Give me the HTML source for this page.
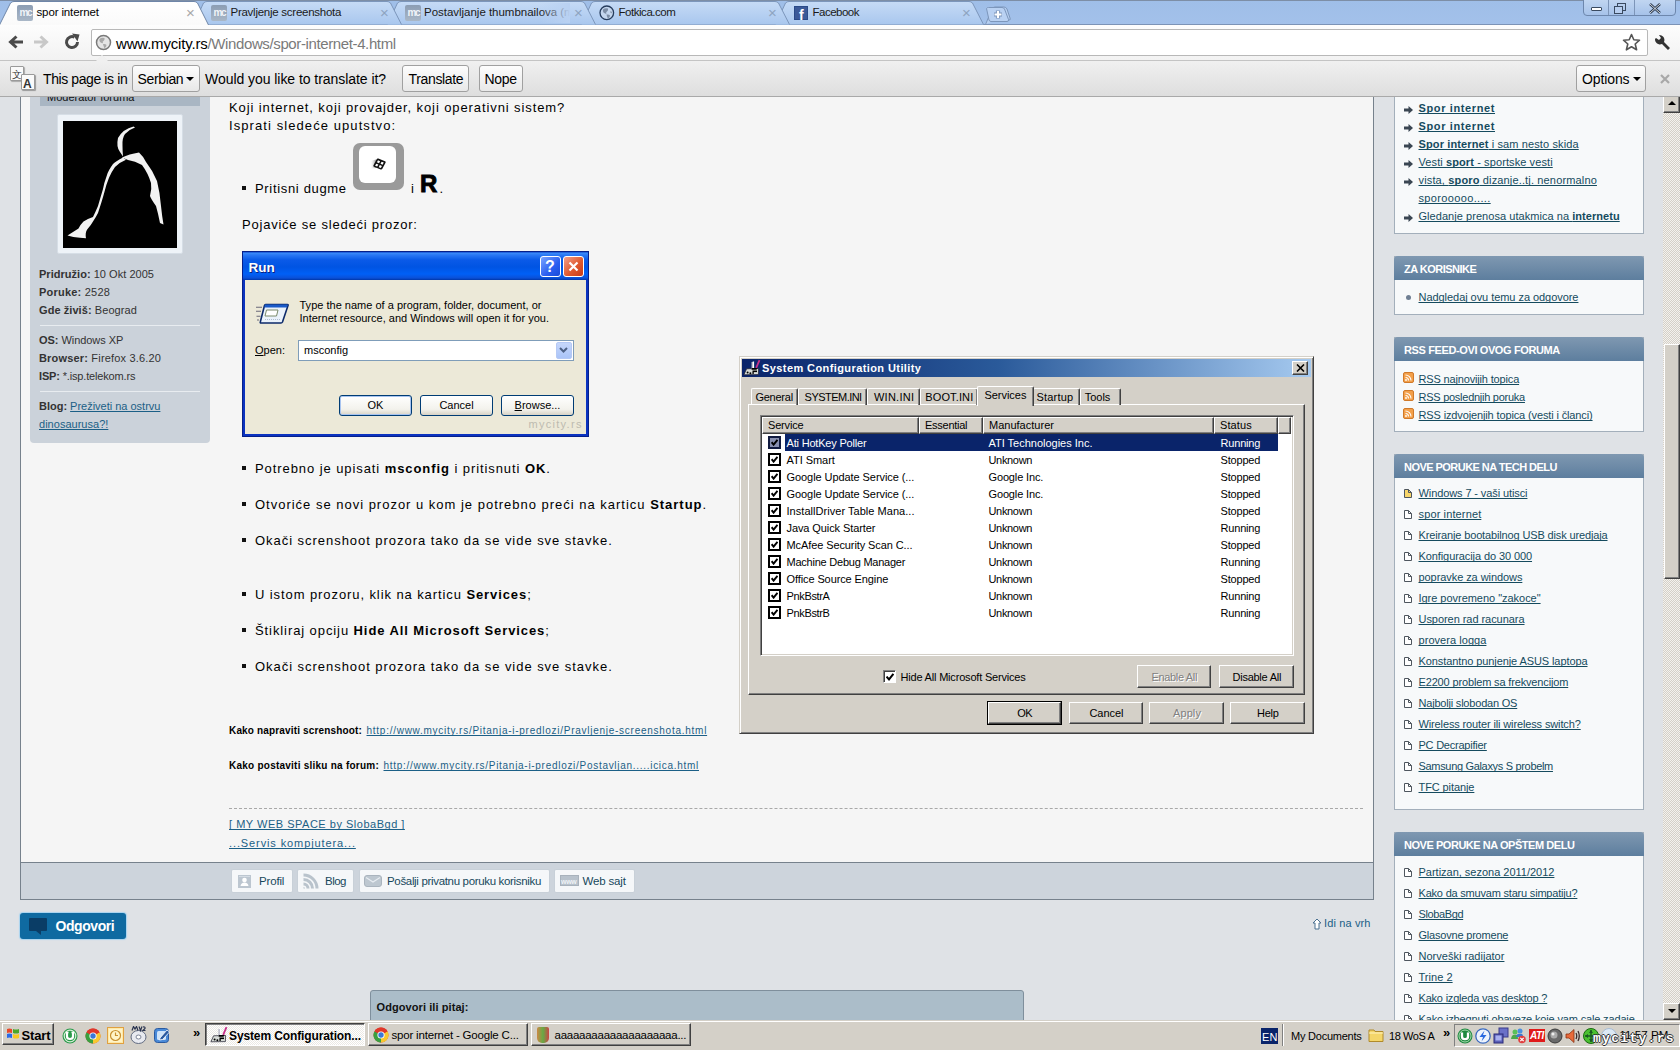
<!DOCTYPE html>
<html><head><meta charset="utf-8"><style>
*{margin:0;padding:0;box-sizing:border-box}
html,body{width:1680px;height:1050px;overflow:hidden;background:#dfe2e6;font-family:"Liberation Sans",sans-serif;position:relative}
.a{position:absolute}
.t{position:absolute;white-space:nowrap;line-height:1;text-decoration-skip-ink:none}
u{text-decoration-skip-ink:none}
.btn{position:absolute;border:1px solid #a0a0a0;border-radius:3px;background:linear-gradient(#fdfdfd,#e8e8e8)}
.xpbtn{position:absolute;background:#d4d0c8;border:1px solid;border-color:#fff #404040 #404040 #fff;box-shadow:inset -1px -1px #808080}
.bul{position:absolute;width:4px;height:4px;background:#111}
.lk{color:#1b5f86;text-decoration:underline;text-decoration-skip-ink:none}
.pb{position:absolute;height:24px;background:#f5f7f9;border:1px solid #c4ccd4;border-radius:2px}
.rb{position:absolute;left:1394px;width:250px;background:#f7f9fa;border:1px solid #a3afbb}
.rh{position:absolute;left:1394px;width:250px;height:24px;background:linear-gradient(#7f98b1,#5d7e9e);border-radius:4px 4px 0 0}
.rl{color:#154b5e;text-decoration:underline;text-decoration-skip-ink:none}
.xpb{position:absolute;height:22px;background:linear-gradient(#fff,#f3f2ec 70%,#d8d3c6);border:1px solid #003c74;border-radius:3px}
.w98{position:absolute;background:#d4d0c8;border:1px solid;border-color:#fff #404040 #404040 #fff;box-shadow:inset -1px -1px #808080}
</style></head><body>
<div class="a" style="left:0px;top:97px;width:1663px;height:923px;background:#dfe2e6"></div>
<div class="a" style="left:20px;top:80px;width:1354px;height:820px;background:#f5f5f5;border:1px solid #76818c;border-top:none"></div>
<div class="a" style="left:21px;top:862px;width:1352px;height:37px;background:#cdd4dc;border-top:1px solid #76818c"></div>
<div class="a" style="left:30px;top:80px;width:180px;height:363px;background:#cbd2da;border-radius:0 0 4px 4px"></div>
<div class="a" style="left:40px;top:80px;width:160px;height:26px;background:#a9b6c3"></div>
<span class="t " style="left:47px;top:91.69px;font-size:11px;color:#111;">Moderator foruma</span>
<div class="a" style="left:57px;top:114px;width:126px;height:140px;background:#eef3f8;border:1px solid #d6dee6;border-radius:2px"></div>
<div class="a" style="left:63px;top:121px;width:114px;height:127px;background:#000;overflow:hidden">
<svg width="114" height="127" viewBox="0 0 114 127">
 <path d="M70.5 5.5 Q60 8 55 17 Q53 26 57 31 L60 35.5 Q59.5 30 59.5 25 Q59 17 62 13 Q66 8.5 72 6.5Z" fill="#f2f2f2"></path><path d="M57 22 Q55 26 58 29" stroke="#f2f2f2" stroke-width="1.5" fill="none"></path>
 <path d="M59 36.5 Q66 33 76 31.5 Q80 35 83 41 Q90 50 94 60 Q97 72 98 85 Q99 95 100.5 103.5 L97 102 Q95 92 93 85 Q88 78 87 75 Q89 68 88 62 Q85 52 79 44 Q72 40 65 39 Z" fill="#f2f2f2"></path>
 <path d="M60 36.5 Q53 40 50 43 Q45 50 44 54 Q41 62 40 68 Q37 78 35 85 Q32 92 30 96 Q24 98 20.5 100.5 Q17 104 15.5 107.5 Q10 111 4.5 114.5 Q10 116.5 17 116.7 L23 117.3 Q22 112 24 108.8 Q28 104 30 100.4 Q33 96 35 92 Q39 80 41 72.6 Q43 64 46 56.8 Q49 50 52 46 Q57 41 63 38.7Z" fill="#f2f2f2"></path>
</svg></div>
<span class="t" style="left: 39px; top: 269.19px; font-size: 11px; color: rgb(51, 51, 51); letter-spacing: 0.03px;"><b>Pridružio:</b> 10 Okt 2005</span>
<span class="t" style="left: 39px; top: 287.19px; font-size: 11px; color: rgb(51, 51, 51); letter-spacing: 0.22px;"><b>Poruke:</b> 2528</span>
<span class="t" style="left: 39px; top: 305.19px; font-size: 11px; color: rgb(51, 51, 51); letter-spacing: 0.07px;"><b>Gde živiš:</b> Beograd</span>
<div class="a" style="left:40px;top:325px;width:160px;height:1px;background:#e8ecf0"></div>
<span class="t" style="left: 39px; top: 334.69px; font-size: 11px; color: rgb(51, 51, 51); letter-spacing: -0.05px;"><b>OS:</b> Windows XP</span>
<span class="t" style="left: 39px; top: 352.69px; font-size: 11px; color: rgb(51, 51, 51); letter-spacing: 0.18px;"><b>Browser:</b> Firefox 3.6.20</span>
<span class="t" style="left: 39px; top: 370.69px; font-size: 11px; color: rgb(51, 51, 51); letter-spacing: -0.16px;"><b>ISP:</b> *.isp.telekom.rs</span>
<div class="a" style="left:40px;top:391px;width:160px;height:1px;background:#e8ecf0"></div>
<span class="t" style="left: 39px; top: 400.69px; font-size: 11px; color: rgb(51, 51, 51); letter-spacing: -0.01px;"><b>Blog:</b> <span class="lk">Preživeti na ostrvu</span></span>
<span class="t lk" style="left: 39px; top: 418.69px; font-size: 11px; color: rgb(27, 95, 134); letter-spacing: 0.02px;">dinosaurusa?!</span>
<span class="t" style="left: 229px; top: 100.6px; font-size: 13px; color: rgb(0, 0, 0); letter-spacing: 0.9px;">Koji internet, koji provajder, koji operativni sistem?</span>
<span class="t" style="left: 229px; top: 118.6px; font-size: 13px; color: rgb(0, 0, 0); letter-spacing: 1.08px;">Isprati sledeće uputstvo:</span>
<div class="a" style="left:242px;top:186px;width:4px;height:4px;background:#111"></div>
<span class="t" style="left: 255px; top: 181.5px; font-size: 13px; color: rgb(0, 0, 0); letter-spacing: 0.67px;">Pritisni dugme</span>
<div class="a" style="left:353px;top:143px;width:51px;height:47px;background:#9a9a9a;border-radius:7px"></div>
<div class="a" style="left:359px;top:146px;width:37px;height:37px;background:#fff;border-radius:6px"></div>
<svg class="a" style="left:369px;top:156px" width="18" height="16" viewBox="0 0 18 16"><defs><linearGradient id="wg" x1="0" x2="1"><stop offset="0" stop-color="#fff" stop-opacity="0"></stop><stop offset="1" stop-color="#888"></stop></linearGradient></defs><path d="M1 5 L7 3.5 L7.5 12 L2 12.5Z" fill="url(#wg)"></path><g transform="translate(10.5 8) rotate(22) skewX(-6)"><rect x="-4.8" y="-4.6" width="9.6" height="9.2" rx="1.2" fill="#111"></rect><rect x="-3.1" y="-2.9" width="2.3" height="2.3" fill="#fff"></rect><rect x="0.8" y="-2.9" width="2.3" height="2.3" fill="#fff"></rect><rect x="-3.1" y="0.9" width="2.3" height="2.3" fill="#fff"></rect><rect x="0.8" y="0.9" width="2.3" height="2.3" fill="#fff"></rect></g></svg>
<span class="t" style="left: 411px; top: 181.5px; font-size: 13px; color: rgb(0, 0, 0); letter-spacing: 1.15px;">i</span>
<span class="t " style="left:420px;top:171.68px;font-size:24px;color:#000;font-weight:bold;-webkit-text-stroke:0.9px #000;letter-spacing:0;transform:scaleX(1.0);transform-origin:0 0">R</span>
<span class="t" style="left: 439.5px; top: 181.5px; font-size: 13px; color: rgb(0, 0, 0); letter-spacing: -0.58px;">.</span>
<span class="t" style="left: 242px; top: 218px; font-size: 13px; color: rgb(0, 0, 0); letter-spacing: 0.78px;">Pojaviće se sledeći prozor:</span>
<div class="a" style="left:242px;top:466px;width:4px;height:4px;background:#111"></div>
<span class="t" style="left: 255px; top: 461.9px; font-size: 13px; color: rgb(0, 0, 0); letter-spacing: 0.92px;">Potrebno je upisati <b>msconfig</b> i pritisnuti <b>OK</b>.</span>
<div class="a" style="left:242px;top:502px;width:4px;height:4px;background:#111"></div>
<span class="t" style="left: 255px; top: 497.9px; font-size: 13px; color: rgb(0, 0, 0); letter-spacing: 0.99px;">Otvoriće se novi prozor u kom je potrebno preći na karticu <b>Startup</b>.</span>
<div class="a" style="left:242px;top:538px;width:4px;height:4px;background:#111"></div>
<span class="t" style="left: 255px; top: 533.9px; font-size: 13px; color: rgb(0, 0, 0); letter-spacing: 0.96px;">Okači screnshoot prozora tako da se vide sve stavke.</span>
<div class="a" style="left:242px;top:592px;width:4px;height:4px;background:#111"></div>
<span class="t" style="left: 255px; top: 588px; font-size: 13px; color: rgb(0, 0, 0); letter-spacing: 0.91px;">U istom prozoru, klik na karticu <b>Services</b>;</span>
<div class="a" style="left:242px;top:628px;width:4px;height:4px;background:#111"></div>
<span class="t" style="left: 255px; top: 624px; font-size: 13px; color: rgb(0, 0, 0); letter-spacing: 0.91px;">Štikliraj opciju <b>Hide All Microsoft Services</b>;</span>
<div class="a" style="left:242px;top:664px;width:4px;height:4px;background:#111"></div>
<span class="t" style="left: 255px; top: 659.7px; font-size: 13px; color: rgb(0, 0, 0); letter-spacing: 0.96px;">Okači screnshoot prozora tako da se vide sve stavke.</span>
<span class="t " style="left: 229px; top: 725.53px; font-size: 10px; color: rgb(0, 0, 0); font-weight: bold; letter-spacing: 0.16px;">Kako napraviti screnshoot:</span>
<span class="t lk" style="left: 366.5px; top: 725.53px; font-size: 10px; color: rgb(27, 95, 134); letter-spacing: 0.74px;">http://www.mycity.rs/Pitanja-i-predlozi/Pravljenje-screenshota.html</span>
<span class="t " style="left: 229px; top: 761.13px; font-size: 10px; color: rgb(0, 0, 0); font-weight: bold; letter-spacing: 0.24px;">Kako postaviti sliku na forum:</span>
<span class="t lk" style="left: 383.5px; top: 761.13px; font-size: 10px; color: rgb(27, 95, 134); letter-spacing: 0.71px;">http://www.mycity.rs/Pitanja-i-predlozi/Postavljan.....icica.html</span>
<div class="a" style="left:229px;top:808px;width:1134px;height:0px;border-top:1px dashed #a8a8a8"></div>
<span class="t lk" style="left: 229px; top: 818.89px; font-size: 11px; color: rgb(27, 95, 134); letter-spacing: 0.51px;">[ MY WEB SPACE by SlobaBgd ]</span>
<span class="t lk" style="left: 229px; top: 837.69px; font-size: 11px; color: rgb(27, 95, 134); letter-spacing: 0.89px;">...Servis kompjutera...</span>
<div class="a" style="left:231px;top:869px;width:62px;height:24px;background:#f5f7f9;border:1px solid #c8d0d8;border-radius:2px"></div>
<svg class="a" style="left:238px;top:875px" width="13" height="13" viewBox="0 0 13 13"><rect width="13" height="13" fill="#bcc6d0"></rect><circle cx="6.5" cy="5" r="2.3" fill="#fff"></circle><path d="M2.5 11 Q3 7.5 6.5 7.5 Q10 7.5 10.5 11Z" fill="#fff"></path><rect x="1" y="1" width="11" height="1" fill="#d4dce4"></rect></svg>
<span class="t " style="left: 259px; top: 875.77px; font-size: 11.5px; color: rgb(23, 72, 92); letter-spacing: -0.16px;">Profil</span>
<div class="a" style="left:297px;top:869px;width:57px;height:24px;background:#f5f7f9;border:1px solid #c8d0d8;border-radius:2px"></div>
<svg class="a" style="left:303px;top:873px" width="16" height="16" viewBox="0 0 16 16"><path d="M0.5 0.5 A15 15 0 0 1 15.5 15.5 H12.5 A12 12 0 0 0 0.5 3.5Z M0.5 5 A10.5 10.5 0 0 1 11 15.5 H8 A7.5 7.5 0 0 0 0.5 8Z M0.5 9.5 A6 6 0 0 1 6.5 15.5 H3.5 A3 3 0 0 0 0.5 12.5Z M0.5 14 A1.5 1.5 0 0 1 2 15.5 H0.5Z" fill="#b9c3cc"></path></svg>
<span class="t " style="left: 325px; top: 875.77px; font-size: 11.5px; color: rgb(23, 72, 92); letter-spacing: -0.54px;">Blog</span>
<div class="a" style="left:359px;top:869px;width:191px;height:24px;background:#f5f7f9;border:1px solid #c8d0d8;border-radius:2px"></div>
<svg class="a" style="left:364px;top:875px" width="18" height="12" viewBox="0 0 18 12"><rect x="0.5" y="0.5" width="17" height="11" rx="2.5" fill="#bdc7d0" stroke="#aab4be"></rect><path d="M2 2.5 L9 7 L16 2.5" fill="none" stroke="#e8edf2" stroke-width="1.2"></path></svg>
<span class="t " style="left: 387px; top: 875.77px; font-size: 11.5px; color: rgb(23, 72, 92); letter-spacing: -0.33px;">Pošalji privatnu poruku korisniku</span>
<div class="a" style="left:554px;top:869px;width:81px;height:24px;background:#f5f7f9;border:1px solid #c8d0d8;border-radius:2px"></div>
<div class="a" style="left:560px;top:875px;width:19px;height:11px;background:#b8c2cc;border:1px solid #a8b2bc"></div><span class="t " style="left:561px;top:878.07px;font-size:7px;color:#eef2f6;font-weight:bold;letter-spacing:-0.3px">www</span>
<span class="t " style="left: 582.5px; top: 875.77px; font-size: 11.5px; color: rgb(23, 72, 92); letter-spacing: -0.16px;">Web sajt</span>
<div class="a" style="left:20px;top:913px;width:106px;height:26px;background:#0f6aa1;border-radius:3px;box-shadow:0 0 1px 1px #a8d4f0"></div>
<div class="a" style="left:29px;top:918px;width:18px;height:13px;background:#0a3d66;border-radius:1px"></div>
<div class="a" style="left:36px;top:931px;width:0;height:0;border-left:5px solid transparent;border-top:4px solid #0a3d66"></div>
<span class="t " style="left: 55.5px; top: 919.15px; font-size: 14px; color: rgb(255, 255, 255); font-weight: bold; letter-spacing: -0.44px;">Odgovori</span>
<svg class="a" style="left:1312px;top:918px" width="10" height="12" viewBox="0 0 10 12"><path d="M5 1 L9 5 H7 V11 H3 V5 H1Z" fill="#fff" stroke="#4a7090" stroke-width="1"></path></svg>
<span class="t " style="left: 1324px; top: 918.19px; font-size: 11px; color: rgb(27, 95, 134); letter-spacing: 0.13px;">Idi na vrh</span>
<div class="a" style="left:370px;top:990px;width:654px;height:40px;background:#abbdc9;border:1px solid #7f8f9c;border-radius:3px 3px 0 0"></div>
<span class="t " style="left: 376.5px; top: 1001.69px; font-size: 11px; color: rgb(17, 17, 17); font-weight: bold; letter-spacing: 0.08px;">Odgovori ili pitaj:</span>
<div class="a" style="left:1394px;top:60px;width:250px;height:174px;background:#f7f9fa;border:1px solid #a3afbb"></div>
<svg class="a" style="left:1404px;top:106px" width="9" height="8" viewBox="0 0 9 8"><path d="M0 2.5 H4.5 V0 L9 4 L4.5 8 V5.5 H0Z" fill="#3a4652"></path></svg>
<span class="t rl" style="left: 1418.5px; top: 103.29px; font-size: 11px; letter-spacing: 0.62px;"><b>Spor internet</b></span>
<svg class="a" style="left:1404px;top:124px" width="9" height="8" viewBox="0 0 9 8"><path d="M0 2.5 H4.5 V0 L9 4 L4.5 8 V5.5 H0Z" fill="#3a4652"></path></svg>
<span class="t rl" style="left: 1418.5px; top: 121.29px; font-size: 11px; letter-spacing: 0.62px;"><b>Spor internet</b></span>
<svg class="a" style="left:1404px;top:142px" width="9" height="8" viewBox="0 0 9 8"><path d="M0 2.5 H4.5 V0 L9 4 L4.5 8 V5.5 H0Z" fill="#3a4652"></path></svg>
<span class="t rl" style="left: 1418.5px; top: 139.29px; font-size: 11px; letter-spacing: 0.12px;"><b>Spor internet</b> i sam nesto skida</span>
<svg class="a" style="left:1404px;top:160px" width="9" height="8" viewBox="0 0 9 8"><path d="M0 2.5 H4.5 V0 L9 4 L4.5 8 V5.5 H0Z" fill="#3a4652"></path></svg>
<span class="t rl" style="left: 1418.5px; top: 157.29px; font-size: 11px; letter-spacing: 0.1px;">Vesti <b>sport</b> - sportske vesti</span>
<svg class="a" style="left:1404px;top:178px" width="9" height="8" viewBox="0 0 9 8"><path d="M0 2.5 H4.5 V0 L9 4 L4.5 8 V5.5 H0Z" fill="#3a4652"></path></svg>
<span class="t rl" style="left: 1418.5px; top: 175.29px; font-size: 11px; letter-spacing: 0.15px;">vista, <b>sporo</b> dizanje..tj. nenormalno</span>
<span class="t rl" style="left: 1418.5px; top: 193.29px; font-size: 11px; letter-spacing: 0.35px;">sporooooo.....</span>
<svg class="a" style="left:1404px;top:214px" width="9" height="8" viewBox="0 0 9 8"><path d="M0 2.5 H4.5 V0 L9 4 L4.5 8 V5.5 H0Z" fill="#3a4652"></path></svg>
<span class="t rl" style="left: 1418.5px; top: 211.29px; font-size: 11px; letter-spacing: 0.05px;">Gledanje prenosa utakmica na <b>internetu</b></span>
<div class="a" style="left:1394px;top:256px;width:250px;height:59px;background:#f7f9fa;border:1px solid #a3afbb"></div><div class="a" style="left:1394px;top:256px;width:250px;height:24px;background:linear-gradient(#7f98b1,#5d7e9e);border-radius:4px 4px 0 0"></div><span class="t " style="left: 1404px; top: 263.69px; font-size: 11px; color: rgb(255, 255, 255); font-weight: bold; letter-spacing: -0.51px;">ZA KORISNIKE</span>
<div class="a" style="left:1406px;top:295px;width:5px;height:5px;border-radius:50%;background:#6f7f93"></div>
<span class="t rl" style="left: 1418.5px; top: 292.19px; font-size: 11px; letter-spacing: -0.05px;">Nadgledaj ovu temu za odgovore</span>
<div class="a" style="left:1394px;top:337px;width:250px;height:95px;background:#f7f9fa;border:1px solid #a3afbb"></div><div class="a" style="left:1394px;top:337px;width:250px;height:24px;background:linear-gradient(#7f98b1,#5d7e9e);border-radius:4px 4px 0 0"></div><span class="t " style="left: 1404px; top: 344.69px; font-size: 11px; color: rgb(255, 255, 255); font-weight: bold; letter-spacing: -0.38px;">RSS FEED-OVI OVOG FORUMA</span>
<svg class="a" style="left:1403px;top:372px" width="11" height="11" viewBox="0 0 11 11"><rect x="0.5" y="0.5" width="10" height="10" rx="1.5" fill="#f3a04a" stroke="#d07a2a"></rect><path d="M2.5 3 A5.5 5.5 0 0 1 8 8.5 M2.5 5.5 A3 3 0 0 1 5.5 8.5" fill="none" stroke="#fff" stroke-width="1.1"></path><circle cx="3" cy="8" r="0.9" fill="#fff"></circle></svg>
<span class="t rl" style="left: 1418.5px; top: 374.09px; font-size: 11px; letter-spacing: -0.16px;">RSS najnovijih topica</span>
<svg class="a" style="left:1403px;top:390px" width="11" height="11" viewBox="0 0 11 11"><rect x="0.5" y="0.5" width="10" height="10" rx="1.5" fill="#f3a04a" stroke="#d07a2a"></rect><path d="M2.5 3 A5.5 5.5 0 0 1 8 8.5 M2.5 5.5 A3 3 0 0 1 5.5 8.5" fill="none" stroke="#fff" stroke-width="1.1"></path><circle cx="3" cy="8" r="0.9" fill="#fff"></circle></svg>
<span class="t rl" style="left: 1418.5px; top: 392.09px; font-size: 11px; letter-spacing: -0.26px;">RSS poslednjih poruka</span>
<svg class="a" style="left:1403px;top:408px" width="11" height="11" viewBox="0 0 11 11"><rect x="0.5" y="0.5" width="10" height="10" rx="1.5" fill="#f3a04a" stroke="#d07a2a"></rect><path d="M2.5 3 A5.5 5.5 0 0 1 8 8.5 M2.5 5.5 A3 3 0 0 1 5.5 8.5" fill="none" stroke="#fff" stroke-width="1.1"></path><circle cx="3" cy="8" r="0.9" fill="#fff"></circle></svg>
<span class="t rl" style="left: 1418.5px; top: 410.09px; font-size: 11px; letter-spacing: -0.13px;">RSS izdvojenjih topica (vesti i članci)</span>
<div class="a" style="left:1394px;top:454px;width:250px;height:356px;background:#f7f9fa;border:1px solid #a3afbb"></div><div class="a" style="left:1394px;top:454px;width:250px;height:24px;background:linear-gradient(#7f98b1,#5d7e9e);border-radius:4px 4px 0 0"></div><span class="t " style="left: 1404px; top: 461.69px; font-size: 11px; color: rgb(255, 255, 255); font-weight: bold; letter-spacing: -0.54px;">NOVE PORUKE NA TECH DELU</span>
<svg class="a" style="left:1404px;top:489px" width="8" height="10" viewBox="0 0 8 10"><path d="M0.5 0.5 H4.5 L7.5 3.5 V8.5 H0.5Z" fill="#f8d66a" stroke="#4e565e"></path><path d="M4.5 0.5 V3.5 H7.5" fill="none" stroke="#4e565e"></path></svg>
<span class="t rl" style="left: 1418.5px; top: 488.29px; font-size: 11px; letter-spacing: -0.1px;">Windows 7 - vaši utisci</span>
<svg class="a" style="left:1404px;top:510px" width="8" height="10" viewBox="0 0 8 10"><path d="M0.5 0.5 H4.5 L7.5 3.5 V8.5 H0.5Z" fill="#fff" stroke="#4e565e"></path><path d="M4.5 0.5 V3.5 H7.5" fill="none" stroke="#4e565e"></path></svg>
<span class="t rl" style="left: 1418.5px; top: 509.29px; font-size: 11px; letter-spacing: 0.13px;">spor internet</span>
<svg class="a" style="left:1404px;top:531px" width="8" height="10" viewBox="0 0 8 10"><path d="M0.5 0.5 H4.5 L7.5 3.5 V8.5 H0.5Z" fill="#fff" stroke="#4e565e"></path><path d="M4.5 0.5 V3.5 H7.5" fill="none" stroke="#4e565e"></path></svg>
<span class="t rl" style="left: 1418.5px; top: 530.29px; font-size: 11px; letter-spacing: -0.14px;">Kreiranje bootabilnog USB disk uredjaja</span>
<svg class="a" style="left:1404px;top:552px" width="8" height="10" viewBox="0 0 8 10"><path d="M0.5 0.5 H4.5 L7.5 3.5 V8.5 H0.5Z" fill="#fff" stroke="#4e565e"></path><path d="M4.5 0.5 V3.5 H7.5" fill="none" stroke="#4e565e"></path></svg>
<span class="t rl" style="left: 1418.5px; top: 551.29px; font-size: 11px; letter-spacing: -0.09px;">Konfiguracija do 30 000</span>
<svg class="a" style="left:1404px;top:573px" width="8" height="10" viewBox="0 0 8 10"><path d="M0.5 0.5 H4.5 L7.5 3.5 V8.5 H0.5Z" fill="#fff" stroke="#4e565e"></path><path d="M4.5 0.5 V3.5 H7.5" fill="none" stroke="#4e565e"></path></svg>
<span class="t rl" style="left: 1418.5px; top: 572.29px; font-size: 11px; letter-spacing: -0.07px;">popravke za windows</span>
<svg class="a" style="left:1404px;top:594px" width="8" height="10" viewBox="0 0 8 10"><path d="M0.5 0.5 H4.5 L7.5 3.5 V8.5 H0.5Z" fill="#fff" stroke="#4e565e"></path><path d="M4.5 0.5 V3.5 H7.5" fill="none" stroke="#4e565e"></path></svg>
<span class="t rl" style="left: 1418.5px; top: 593.29px; font-size: 11px; letter-spacing: -0.03px;">Igre povremeno "zakoce"</span>
<svg class="a" style="left:1404px;top:615px" width="8" height="10" viewBox="0 0 8 10"><path d="M0.5 0.5 H4.5 L7.5 3.5 V8.5 H0.5Z" fill="#fff" stroke="#4e565e"></path><path d="M4.5 0.5 V3.5 H7.5" fill="none" stroke="#4e565e"></path></svg>
<span class="t rl" style="left: 1418.5px; top: 614.29px; font-size: 11px; letter-spacing: -0.05px;">Usporen rad racunara</span>
<svg class="a" style="left:1404px;top:636px" width="8" height="10" viewBox="0 0 8 10"><path d="M0.5 0.5 H4.5 L7.5 3.5 V8.5 H0.5Z" fill="#fff" stroke="#4e565e"></path><path d="M4.5 0.5 V3.5 H7.5" fill="none" stroke="#4e565e"></path></svg>
<span class="t rl" style="left: 1418.5px; top: 635.29px; font-size: 11px; letter-spacing: 0.05px;">provera logga</span>
<svg class="a" style="left:1404px;top:657px" width="8" height="10" viewBox="0 0 8 10"><path d="M0.5 0.5 H4.5 L7.5 3.5 V8.5 H0.5Z" fill="#fff" stroke="#4e565e"></path><path d="M4.5 0.5 V3.5 H7.5" fill="none" stroke="#4e565e"></path></svg>
<span class="t rl" style="left: 1418.5px; top: 656.29px; font-size: 11px; letter-spacing: -0.09px;">Konstantno punjenje ASUS laptopa</span>
<svg class="a" style="left:1404px;top:678px" width="8" height="10" viewBox="0 0 8 10"><path d="M0.5 0.5 H4.5 L7.5 3.5 V8.5 H0.5Z" fill="#fff" stroke="#4e565e"></path><path d="M4.5 0.5 V3.5 H7.5" fill="none" stroke="#4e565e"></path></svg>
<span class="t rl" style="left: 1418.5px; top: 677.29px; font-size: 11px; letter-spacing: -0.15px;">E2200 problem sa frekvencijom</span>
<svg class="a" style="left:1404px;top:699px" width="8" height="10" viewBox="0 0 8 10"><path d="M0.5 0.5 H4.5 L7.5 3.5 V8.5 H0.5Z" fill="#fff" stroke="#4e565e"></path><path d="M4.5 0.5 V3.5 H7.5" fill="none" stroke="#4e565e"></path></svg>
<span class="t rl" style="left: 1418.5px; top: 698.29px; font-size: 11px; letter-spacing: -0.2px;">Najbolji slobodan OS</span>
<svg class="a" style="left:1404px;top:720px" width="8" height="10" viewBox="0 0 8 10"><path d="M0.5 0.5 H4.5 L7.5 3.5 V8.5 H0.5Z" fill="#fff" stroke="#4e565e"></path><path d="M4.5 0.5 V3.5 H7.5" fill="none" stroke="#4e565e"></path></svg>
<span class="t rl" style="left: 1418.5px; top: 719.29px; font-size: 11px; letter-spacing: -0.13px;">Wireless router ili wireless switch?</span>
<svg class="a" style="left:1404px;top:741px" width="8" height="10" viewBox="0 0 8 10"><path d="M0.5 0.5 H4.5 L7.5 3.5 V8.5 H0.5Z" fill="#fff" stroke="#4e565e"></path><path d="M4.5 0.5 V3.5 H7.5" fill="none" stroke="#4e565e"></path></svg>
<span class="t rl" style="left: 1418.5px; top: 740.29px; font-size: 11px; letter-spacing: -0.23px;">PC Decrapifier</span>
<svg class="a" style="left:1404px;top:762px" width="8" height="10" viewBox="0 0 8 10"><path d="M0.5 0.5 H4.5 L7.5 3.5 V8.5 H0.5Z" fill="#fff" stroke="#4e565e"></path><path d="M4.5 0.5 V3.5 H7.5" fill="none" stroke="#4e565e"></path></svg>
<span class="t rl" style="left: 1418.5px; top: 761.29px; font-size: 11px; letter-spacing: -0.32px;">Samsung Galaxys S probelm</span>
<svg class="a" style="left:1404px;top:783px" width="8" height="10" viewBox="0 0 8 10"><path d="M0.5 0.5 H4.5 L7.5 3.5 V8.5 H0.5Z" fill="#fff" stroke="#4e565e"></path><path d="M4.5 0.5 V3.5 H7.5" fill="none" stroke="#4e565e"></path></svg>
<span class="t rl" style="left: 1418.5px; top: 782.29px; font-size: 11px; letter-spacing: -0.09px;">TFC pitanje</span>
<div class="a" style="left:1394px;top:832px;width:250px;height:229px;background:#f7f9fa;border:1px solid #a3afbb"></div><div class="a" style="left:1394px;top:832px;width:250px;height:24px;background:linear-gradient(#7f98b1,#5d7e9e);border-radius:4px 4px 0 0"></div><span class="t " style="left: 1404px; top: 839.69px; font-size: 11px; color: rgb(255, 255, 255); font-weight: bold; letter-spacing: -0.46px;">NOVE PORUKE NA OPŠTEM DELU</span>
<svg class="a" style="left:1404px;top:868px" width="8" height="10" viewBox="0 0 8 10"><path d="M0.5 0.5 H4.5 L7.5 3.5 V8.5 H0.5Z" fill="#fff" stroke="#4e565e"></path><path d="M4.5 0.5 V3.5 H7.5" fill="none" stroke="#4e565e"></path></svg>
<span class="t rl" style="left: 1418.5px; top: 867.19px; font-size: 11px; letter-spacing: -0.01px;">Partizan, sezona 2011/2012</span>
<svg class="a" style="left:1404px;top:889px" width="8" height="10" viewBox="0 0 8 10"><path d="M0.5 0.5 H4.5 L7.5 3.5 V8.5 H0.5Z" fill="#fff" stroke="#4e565e"></path><path d="M4.5 0.5 V3.5 H7.5" fill="none" stroke="#4e565e"></path></svg>
<span class="t rl" style="left: 1418.5px; top: 888.19px; font-size: 11px; letter-spacing: -0.2px;">Kako da smuvam staru simpatiju?</span>
<svg class="a" style="left:1404px;top:910px" width="8" height="10" viewBox="0 0 8 10"><path d="M0.5 0.5 H4.5 L7.5 3.5 V8.5 H0.5Z" fill="#fff" stroke="#4e565e"></path><path d="M4.5 0.5 V3.5 H7.5" fill="none" stroke="#4e565e"></path></svg>
<span class="t rl" style="left: 1418.5px; top: 909.19px; font-size: 11px; letter-spacing: -0.38px;">SlobaBgd</span>
<svg class="a" style="left:1404px;top:931px" width="8" height="10" viewBox="0 0 8 10"><path d="M0.5 0.5 H4.5 L7.5 3.5 V8.5 H0.5Z" fill="#fff" stroke="#4e565e"></path><path d="M4.5 0.5 V3.5 H7.5" fill="none" stroke="#4e565e"></path></svg>
<span class="t rl" style="left: 1418.5px; top: 930.19px; font-size: 11px; letter-spacing: -0.2px;">Glasovne promene</span>
<svg class="a" style="left:1404px;top:952px" width="8" height="10" viewBox="0 0 8 10"><path d="M0.5 0.5 H4.5 L7.5 3.5 V8.5 H0.5Z" fill="#fff" stroke="#4e565e"></path><path d="M4.5 0.5 V3.5 H7.5" fill="none" stroke="#4e565e"></path></svg>
<span class="t rl" style="left: 1418.5px; top: 951.19px; font-size: 11px; letter-spacing: 0.02px;">Norveški radijator</span>
<svg class="a" style="left:1404px;top:973px" width="8" height="10" viewBox="0 0 8 10"><path d="M0.5 0.5 H4.5 L7.5 3.5 V8.5 H0.5Z" fill="#fff" stroke="#4e565e"></path><path d="M4.5 0.5 V3.5 H7.5" fill="none" stroke="#4e565e"></path></svg>
<span class="t rl" style="left: 1418.5px; top: 972.19px; font-size: 11px; letter-spacing: 0.04px;">Trine 2</span>
<svg class="a" style="left:1404px;top:994px" width="8" height="10" viewBox="0 0 8 10"><path d="M0.5 0.5 H4.5 L7.5 3.5 V8.5 H0.5Z" fill="#fff" stroke="#4e565e"></path><path d="M4.5 0.5 V3.5 H7.5" fill="none" stroke="#4e565e"></path></svg>
<span class="t rl" style="left: 1418.5px; top: 993.19px; font-size: 11px; letter-spacing: -0.2px;">Kako izgleda vas desktop ?</span>
<svg class="a" style="left:1404px;top:1015px" width="8" height="10" viewBox="0 0 8 10"><path d="M0.5 0.5 H4.5 L7.5 3.5 V8.5 H0.5Z" fill="#fff" stroke="#4e565e"></path><path d="M4.5 0.5 V3.5 H7.5" fill="none" stroke="#4e565e"></path></svg>
<span class="t rl" style="left: 1418.5px; top: 1014.19px; font-size: 11px; letter-spacing: -0.15px;">Kako izbegnuti obaveze koje vam cale zadaje</span>
<div class="a" style="left:242px;top:251px;width:347px;height:186px;background:#0b33c0;border:1px solid #06208a"></div>
<div class="a" style="left:243px;top:252px;width:345px;height:28px;background:linear-gradient(#0a3fc8 0,#3d8cf8 1px,#2a78f4 3px,#0a5ae8 8px,#0054e3 15px,#0060f6 22px,#0a50d8 26px,#0036a8 28px)"></div>
<span class="t " style="left:248.5px;top:260.77px;font-size:13.5px;color:#fff;font-weight:bold;text-shadow:1px 1px #0a2080">Run</span>
<div class="a" style="left:540px;top:256px;width:21px;height:21px;background:linear-gradient(135deg,#7aa4ff,#2a5ef0 60%,#1a4ad8);border:1px solid #fff;border-radius:3px"></div>
<span class="t " style="left:545px;top:259.46px;font-size:16px;color:#fff;font-weight:bold;">?</span>
<div class="a" style="left:563px;top:256px;width:21px;height:21px;background:linear-gradient(135deg,#f4a08a,#e05a30 55%,#c83a18);border:1px solid #fff;border-radius:3px"></div>
<svg class="a" style="left:567px;top:260px" width="13" height="13" viewBox="0 0 13 13"><path d="M2.5 2.5 L10.5 10.5 M10.5 2.5 L2.5 10.5" stroke="#fff" stroke-width="2.2"></path></svg>
<div class="a" style="left:245px;top:280px;width:341px;height:154px;background:#ece9d8"></div>
<svg class="a" style="left:254px;top:301px" width="36" height="26" viewBox="0 0 36 26"><path d="M2 6.2 H8 M2 10.2 H7 M2.5 15.2 H6.5 M3 19 H5" stroke="#6a6a7a" stroke-width="1.1"></path><path d="M11.5 3.5 L33.5 3.5 Q34.5 3.5 34 4.5 L28.5 21 Q28 22 27 22 L7 22 Q6 22 6.3 21 L10.5 4.5 Q10.8 3.5 11.5 3.5Z" fill="#eaf2fb" stroke="#0c2a6a" stroke-width="1.6"></path><path d="M11 3.6 H33.8 L32.9 6.4 H10.3Z" fill="#1a5ac8"></path><path d="M12.5 9 H24 L22.5 15 H11Z" fill="#fff" stroke="#7a8a6a" stroke-width="1"></path><path d="M11 18.5 H27" stroke="#a0b0c8" stroke-width="0.8" stroke-dasharray="1 1"></path></svg>
<span class="t " style="left: 299.5px; top: 300.19px; font-size: 11px; color: rgb(0, 0, 0); letter-spacing: 0.01px;">Type the name of a program, folder, document, or</span>
<span class="t " style="left: 299.5px; top: 313.19px; font-size: 11px; color: rgb(0, 0, 0); letter-spacing: 0px;">Internet resource, and Windows will open it for you.</span>
<span class="t " style="left:255px;top:344.69px;font-size:11px;color:#000;"><u>O</u>pen:</span>
<div class="a" style="left:298px;top:340px;width:276px;height:21px;background:#fff;border:1px solid #7f9db9"></div>
<span class="t " style="left:304px;top:344.69px;font-size:11px;color:#000;">msconfig</span>
<div class="a" style="left:556px;top:342px;width:16px;height:17px;background:linear-gradient(#c6d7fb,#aac4f8);border:1px solid #b5c9f5;border-radius:2px"></div>
<svg class="a" style="left:559px;top:347px" width="9" height="6" viewBox="0 0 9 6"><path d="M1 1 L4.5 4.5 L8 1" fill="none" stroke="#4d6185" stroke-width="2"></path></svg>
<div class="a" style="left:339px;top:395px;width:73px;height:21px;background:linear-gradient(#fff,#f3f2ec 70%,#d8d3c6);border:1px solid #003c74;border-radius:3px;box-shadow:inset 0 0 0 1px #a8c4f0;"></div>
<span class="t" style="left:339px;width:73px;text-align:center;top:399.69px;font-size:11px;color:#000">OK</span>
<div class="a" style="left:420px;top:395px;width:73px;height:21px;background:linear-gradient(#fff,#f3f2ec 70%,#d8d3c6);border:1px solid #003c74;border-radius:3px;"></div>
<span class="t" style="left:420px;width:73px;text-align:center;top:399.69px;font-size:11px;color:#000">Cancel</span>
<div class="a" style="left:501px;top:395px;width:73px;height:21px;background:linear-gradient(#fff,#f3f2ec 70%,#d8d3c6);border:1px solid #003c74;border-radius:3px;"></div>
<span class="t" style="left:501px;width:73px;text-align:center;top:399.69px;font-size:11px;color:#000"><u>B</u>rowse...</span>
<span class="t " style="left: 528.5px; top: 419.19px; font-size: 11px; color: rgb(189, 187, 176); letter-spacing: 1.29px;">mycity.rs</span>
<div class="a" style="left:739px;top:356px;width:575px;height:378px;background:#d4d0c8;border:1px solid;border-color:#d4d0c8 #404040 #404040 #d4d0c8;box-shadow:inset 1px 1px #fff,inset -1px -1px #808080"></div>
<div class="a" style="left:742px;top:359px;width:569px;height:18px;background:linear-gradient(90deg,#0a246a 0%,#2a5a9a 45%,#a6caf0 100%)"></div>
<svg class="a" style="left:742px;top:359px" width="20" height="18" viewBox="0 0 20 18"><path d="M1.9 15.8 L4.6 9.8 L16.6 9.4 L16.4 15.6Z" fill="#d8dcd8" stroke="#1a1a2a" stroke-width="0.7"></path><rect x="9.5" y="3" width="1.6" height="6.5" fill="#aab"></rect><rect x="10.7" y="2.5" width="1.4" height="7" fill="#fff"></rect><path d="M10 9 H15.5 L14.5 10.8 H9.5Z" fill="#000"></path><path d="M17.5 1.2 L14.2 8.8" stroke="#c8308a" stroke-width="1.8"></path><circle cx="5.6" cy="13.4" r="1" fill="#000"></circle><circle cx="8.4" cy="14.2" r="1" fill="#000"></circle><path d="M10.5 12.3 H15" stroke="#000" stroke-width="1.6"></path><circle cx="11.1" cy="14" r="0.9" fill="#000"></circle></svg>
<span class="t " style="left: 762px; top: 362.69px; font-size: 11px; color: rgb(255, 255, 255); font-weight: bold; letter-spacing: 0.41px;">System Configuration Utility</span>
<div class="a" style="left:1292px;top:361px;width:16px;height:14px;background:#d4d0c8;border:1px solid;border-color:#fff #404040 #404040 #fff;box-shadow:inset -1px -1px #808080"></div>
<svg class="a" style="left:1296px;top:364px" width="9" height="8" viewBox="0 0 9 8"><path d="M1 0.5 L8 7.5 M8 0.5 L1 7.5" stroke="#000" stroke-width="1.6"></path></svg>
<div class="a" style="left:748px;top:404px;width:557px;height:291px;border:1px solid;border-color:#fff #404040 #404040 #fff;box-shadow:inset -1px -1px #808080"></div>
<div class="a" style="left:751px;top:388px;width:47px;height:17px;border:1px solid;border-color:#fff #404040 transparent #fff;border-bottom:none;box-shadow:inset -1px 0 #808080;border-radius:2px 2px 0 0"></div>
<span class="t " style="left: 755.4px; top: 391.69px; font-size: 11px; color: rgb(0, 0, 0); letter-spacing: -0.24px;">General</span>
<div class="a" style="left:798px;top:388px;width:69px;height:17px;border:1px solid;border-color:#fff #404040 transparent #fff;border-bottom:none;box-shadow:inset -1px 0 #808080;border-radius:2px 2px 0 0"></div>
<span class="t " style="left: 804.6px; top: 391.69px; font-size: 11px; color: rgb(0, 0, 0); letter-spacing: -0.53px;">SYSTEM.INI</span>
<div class="a" style="left:867px;top:388px;width:53px;height:17px;border:1px solid;border-color:#fff #404040 transparent #fff;border-bottom:none;box-shadow:inset -1px 0 #808080;border-radius:2px 2px 0 0"></div>
<span class="t " style="left: 873.9px; top: 391.69px; font-size: 11px; color: rgb(0, 0, 0); letter-spacing: 0.28px;">WIN.INI</span>
<div class="a" style="left:920px;top:388px;width:58px;height:17px;border:1px solid;border-color:#fff #404040 transparent #fff;border-bottom:none;box-shadow:inset -1px 0 #808080;border-radius:2px 2px 0 0"></div>
<span class="t " style="left: 925.3px; top: 391.69px; font-size: 11px; color: rgb(0, 0, 0); letter-spacing: 0.12px;">BOOT.INI</span>
<div class="a" style="left:1033px;top:388px;width:47px;height:17px;border:1px solid;border-color:#fff #404040 transparent #fff;border-bottom:none;box-shadow:inset -1px 0 #808080;border-radius:2px 2px 0 0"></div>
<span class="t " style="left: 1036.5px; top: 391.69px; font-size: 11px; color: rgb(0, 0, 0); letter-spacing: 0.2px;">Startup</span>
<div class="a" style="left:1080px;top:388px;width:41px;height:17px;border:1px solid;border-color:#fff #404040 transparent #fff;border-bottom:none;box-shadow:inset -1px 0 #808080;border-radius:2px 2px 0 0"></div>
<span class="t " style="left: 1084.8px; top: 391.69px; font-size: 11px; color: rgb(0, 0, 0); letter-spacing: -0.03px;">Tools</span>
<div class="a" style="left:977px;top:386px;width:57px;height:20px;background:#d4d0c8;border:1px solid;border-color:#fff #404040 transparent #fff;border-bottom:none;box-shadow:inset -1px 0 #808080;border-radius:2px 2px 0 0"></div>
<span class="t " style="left: 984.5px; top: 390.19px; font-size: 11px; color: rgb(0, 0, 0); letter-spacing: -0.04px;">Services</span>
<div class="a" style="left:760px;top:415px;width:534px;height:241px;background:#fff;border:1px solid;border-color:#808080 #fff #fff #808080;box-shadow:inset 1px 1px #404040,inset -1px -1px #d4d0c8"></div>
<div class="a" style="left:762px;top:417px;width:157px;height:17px;background:#d4d0c8;border:1px solid;border-color:#fff #404040 #404040 #fff;box-shadow:inset -1px -1px #808080"></div>
<span class="t " style="left: 768px; top: 420.19px; font-size: 11px; color: rgb(0, 0, 0); letter-spacing: -0.18px;">Service</span>
<div class="a" style="left:919px;top:417px;width:64px;height:17px;background:#d4d0c8;border:1px solid;border-color:#fff #404040 #404040 #fff;box-shadow:inset -1px -1px #808080"></div>
<span class="t " style="left: 925px; top: 420.19px; font-size: 11px; color: rgb(0, 0, 0); letter-spacing: -0.26px;">Essential</span>
<div class="a" style="left:983px;top:417px;width:231px;height:17px;background:#d4d0c8;border:1px solid;border-color:#fff #404040 #404040 #fff;box-shadow:inset -1px -1px #808080"></div>
<span class="t " style="left: 989px; top: 420.19px; font-size: 11px; color: rgb(0, 0, 0); letter-spacing: 0.01px;">Manufacturer</span>
<div class="a" style="left:1214px;top:417px;width:64px;height:17px;background:#d4d0c8;border:1px solid;border-color:#fff #404040 #404040 #fff;box-shadow:inset -1px -1px #808080"></div>
<span class="t " style="left: 1220px; top: 420.19px; font-size: 11px; color: rgb(0, 0, 0); letter-spacing: 0.1px;">Status</span>
<div class="a" style="left:1278px;top:417px;width:13px;height:17px;background:#d4d0c8;border:1px solid;border-color:#fff #404040 #404040 #fff;box-shadow:inset -1px -1px #808080"></div>
<div class="a" style="left:785px;top:434px;width:493px;height:17px;background:#0a246a"></div>
<div class="a" style="left:768px;top:436px;width:13px;height:13px;border:2px solid #101a40;background:#8890b0"><svg class="a" style="left:1px;top:1px" width="7" height="7" viewBox="0 0 7 7"><path d="M0.6 3.2 L2.6 5.6 L6.5 0.8" fill="none" stroke="#000" stroke-width="2"></path></svg></div>
<span class="t " style="left: 786.5px; top: 437.69px; font-size: 11px; color: rgb(255, 255, 255); letter-spacing: -0.19px;">Ati HotKey Poller</span>
<span class="t " style="left: 988.5px; top: 437.69px; font-size: 11px; color: rgb(255, 255, 255); letter-spacing: -0.01px;">ATI Technologies Inc.</span>
<span class="t " style="left: 1220.5px; top: 437.69px; font-size: 11px; color: rgb(255, 255, 255); letter-spacing: -0.18px;">Running</span>
<div class="a" style="left:768px;top:453px;width:13px;height:13px;border:2px solid #000;background:#fff"><svg class="a" style="left:1px;top:1px" width="7" height="7" viewBox="0 0 7 7"><path d="M0.6 3.2 L2.6 5.6 L6.5 0.8" fill="none" stroke="#000" stroke-width="2"></path></svg></div>
<span class="t " style="left: 786.5px; top: 454.69px; font-size: 11px; color: rgb(0, 0, 0); letter-spacing: -0.04px;">ATI Smart</span>
<span class="t " style="left: 988.5px; top: 454.69px; font-size: 11px; color: rgb(0, 0, 0); letter-spacing: -0.33px;">Unknown</span>
<span class="t " style="left: 1220.5px; top: 454.69px; font-size: 11px; color: rgb(0, 0, 0); letter-spacing: -0.18px;">Stopped</span>
<div class="a" style="left:768px;top:470px;width:13px;height:13px;border:2px solid #000;background:#fff"><svg class="a" style="left:1px;top:1px" width="7" height="7" viewBox="0 0 7 7"><path d="M0.6 3.2 L2.6 5.6 L6.5 0.8" fill="none" stroke="#000" stroke-width="2"></path></svg></div>
<span class="t " style="left: 786.5px; top: 471.69px; font-size: 11px; color: rgb(0, 0, 0); letter-spacing: -0.07px;">Google Update Service (...</span>
<span class="t " style="left: 988.5px; top: 471.69px; font-size: 11px; color: rgb(0, 0, 0); letter-spacing: -0.14px;">Google Inc.</span>
<span class="t " style="left: 1220.5px; top: 471.69px; font-size: 11px; color: rgb(0, 0, 0); letter-spacing: -0.18px;">Stopped</span>
<div class="a" style="left:768px;top:487px;width:13px;height:13px;border:2px solid #000;background:#fff"><svg class="a" style="left:1px;top:1px" width="7" height="7" viewBox="0 0 7 7"><path d="M0.6 3.2 L2.6 5.6 L6.5 0.8" fill="none" stroke="#000" stroke-width="2"></path></svg></div>
<span class="t " style="left: 786.5px; top: 488.69px; font-size: 11px; color: rgb(0, 0, 0); letter-spacing: -0.07px;">Google Update Service (...</span>
<span class="t " style="left: 988.5px; top: 488.69px; font-size: 11px; color: rgb(0, 0, 0); letter-spacing: -0.14px;">Google Inc.</span>
<span class="t " style="left: 1220.5px; top: 488.69px; font-size: 11px; color: rgb(0, 0, 0); letter-spacing: -0.18px;">Stopped</span>
<div class="a" style="left:768px;top:504px;width:13px;height:13px;border:2px solid #000;background:#fff"><svg class="a" style="left:1px;top:1px" width="7" height="7" viewBox="0 0 7 7"><path d="M0.6 3.2 L2.6 5.6 L6.5 0.8" fill="none" stroke="#000" stroke-width="2"></path></svg></div>
<span class="t " style="left: 786.5px; top: 505.69px; font-size: 11px; color: rgb(0, 0, 0); letter-spacing: 0.04px;">InstallDriver Table Mana...</span>
<span class="t " style="left: 988.5px; top: 505.69px; font-size: 11px; color: rgb(0, 0, 0); letter-spacing: -0.33px;">Unknown</span>
<span class="t " style="left: 1220.5px; top: 505.69px; font-size: 11px; color: rgb(0, 0, 0); letter-spacing: -0.18px;">Stopped</span>
<div class="a" style="left:768px;top:521px;width:13px;height:13px;border:2px solid #000;background:#fff"><svg class="a" style="left:1px;top:1px" width="7" height="7" viewBox="0 0 7 7"><path d="M0.6 3.2 L2.6 5.6 L6.5 0.8" fill="none" stroke="#000" stroke-width="2"></path></svg></div>
<span class="t " style="left: 786.5px; top: 522.69px; font-size: 11px; color: rgb(0, 0, 0); letter-spacing: -0.09px;">Java Quick Starter</span>
<span class="t " style="left: 988.5px; top: 522.69px; font-size: 11px; color: rgb(0, 0, 0); letter-spacing: -0.33px;">Unknown</span>
<span class="t " style="left: 1220.5px; top: 522.69px; font-size: 11px; color: rgb(0, 0, 0); letter-spacing: -0.18px;">Running</span>
<div class="a" style="left:768px;top:538px;width:13px;height:13px;border:2px solid #000;background:#fff"><svg class="a" style="left:1px;top:1px" width="7" height="7" viewBox="0 0 7 7"><path d="M0.6 3.2 L2.6 5.6 L6.5 0.8" fill="none" stroke="#000" stroke-width="2"></path></svg></div>
<span class="t " style="left: 786.5px; top: 539.69px; font-size: 11px; color: rgb(0, 0, 0); letter-spacing: -0.1px;">McAfee Security Scan C...</span>
<span class="t " style="left: 988.5px; top: 539.69px; font-size: 11px; color: rgb(0, 0, 0); letter-spacing: -0.33px;">Unknown</span>
<span class="t " style="left: 1220.5px; top: 539.69px; font-size: 11px; color: rgb(0, 0, 0); letter-spacing: -0.18px;">Stopped</span>
<div class="a" style="left:768px;top:555px;width:13px;height:13px;border:2px solid #000;background:#fff"><svg class="a" style="left:1px;top:1px" width="7" height="7" viewBox="0 0 7 7"><path d="M0.6 3.2 L2.6 5.6 L6.5 0.8" fill="none" stroke="#000" stroke-width="2"></path></svg></div>
<span class="t " style="left: 786.5px; top: 556.69px; font-size: 11px; color: rgb(0, 0, 0); letter-spacing: -0.23px;">Machine Debug Manager</span>
<span class="t " style="left: 988.5px; top: 556.69px; font-size: 11px; color: rgb(0, 0, 0); letter-spacing: -0.33px;">Unknown</span>
<span class="t " style="left: 1220.5px; top: 556.69px; font-size: 11px; color: rgb(0, 0, 0); letter-spacing: -0.18px;">Running</span>
<div class="a" style="left:768px;top:572px;width:13px;height:13px;border:2px solid #000;background:#fff"><svg class="a" style="left:1px;top:1px" width="7" height="7" viewBox="0 0 7 7"><path d="M0.6 3.2 L2.6 5.6 L6.5 0.8" fill="none" stroke="#000" stroke-width="2"></path></svg></div>
<span class="t " style="left: 786.5px; top: 573.69px; font-size: 11px; color: rgb(0, 0, 0); letter-spacing: -0.1px;">Office Source Engine</span>
<span class="t " style="left: 988.5px; top: 573.69px; font-size: 11px; color: rgb(0, 0, 0); letter-spacing: -0.33px;">Unknown</span>
<span class="t " style="left: 1220.5px; top: 573.69px; font-size: 11px; color: rgb(0, 0, 0); letter-spacing: -0.18px;">Stopped</span>
<div class="a" style="left:768px;top:589px;width:13px;height:13px;border:2px solid #000;background:#fff"><svg class="a" style="left:1px;top:1px" width="7" height="7" viewBox="0 0 7 7"><path d="M0.6 3.2 L2.6 5.6 L6.5 0.8" fill="none" stroke="#000" stroke-width="2"></path></svg></div>
<span class="t " style="left: 786.5px; top: 590.69px; font-size: 11px; color: rgb(0, 0, 0); letter-spacing: -0.35px;">PnkBstrA</span>
<span class="t " style="left: 988.5px; top: 590.69px; font-size: 11px; color: rgb(0, 0, 0); letter-spacing: -0.33px;">Unknown</span>
<span class="t " style="left: 1220.5px; top: 590.69px; font-size: 11px; color: rgb(0, 0, 0); letter-spacing: -0.18px;">Running</span>
<div class="a" style="left:768px;top:606px;width:13px;height:13px;border:2px solid #000;background:#fff"><svg class="a" style="left:1px;top:1px" width="7" height="7" viewBox="0 0 7 7"><path d="M0.6 3.2 L2.6 5.6 L6.5 0.8" fill="none" stroke="#000" stroke-width="2"></path></svg></div>
<span class="t " style="left: 786.5px; top: 607.69px; font-size: 11px; color: rgb(0, 0, 0); letter-spacing: -0.35px;">PnkBstrB</span>
<span class="t " style="left: 988.5px; top: 607.69px; font-size: 11px; color: rgb(0, 0, 0); letter-spacing: -0.33px;">Unknown</span>
<span class="t " style="left: 1220.5px; top: 607.69px; font-size: 11px; color: rgb(0, 0, 0); letter-spacing: -0.18px;">Running</span>
<div class="a" style="left:883px;top:670px;width:13px;height:13px;background:#fff;border:1px solid;border-color:#808080 #fff #fff #808080;box-shadow:inset 1px 1px #404040"><svg class="a" style="left:2px;top:2px" width="8" height="8" viewBox="0 0 8 8"><path d="M0.6 3.6 L3 6.4 L7.4 0.8" fill="none" stroke="#000" stroke-width="2"></path></svg></div>
<span class="t " style="left: 900.5px; top: 671.99px; font-size: 11px; color: rgb(0, 0, 0); letter-spacing: -0.19px;">Hide All Microsoft Services</span>
<div class="a" style="left:1137px;top:665px;width:74px;height:23px;background:#d4d0c8;border:1px solid;border-color:#fff #404040 #404040 #fff;box-shadow:inset -1px -1px #808080;"></div><span class="t " style="left: 1151.5px; top: 671.69px; font-size: 11px; color: rgb(128, 128, 128); text-shadow: rgb(255, 255, 255) 1px 1px; letter-spacing: -0.34px;">Enable All</span>
<div class="a" style="left:1219px;top:665px;width:75px;height:23px;background:#d4d0c8;border:1px solid;border-color:#fff #404040 #404040 #fff;box-shadow:inset -1px -1px #808080;"></div><span class="t " style="left: 1232.5px; top: 671.69px; font-size: 11px; color: rgb(0, 0, 0); letter-spacing: -0.25px;">Disable All</span>
<div class="a" style="left:988px;top:702px;width:73px;height:22px;background:#d4d0c8;border:1px solid;border-color:#fff #404040 #404040 #fff;box-shadow:inset -1px -1px #808080;outline:1px solid #000;"></div><span class="t " style="left: 1017.25px; top: 708.19px; font-size: 11px; color: rgb(0, 0, 0); letter-spacing: -0.53px;">OK</span>
<div class="a" style="left:1069px;top:702px;width:74px;height:22px;background:#d4d0c8;border:1px solid;border-color:#fff #404040 #404040 #fff;box-shadow:inset -1px -1px #808080;"></div><span class="t " style="left: 1089.5px; top: 708.19px; font-size: 11px; color: rgb(0, 0, 0); letter-spacing: -0.07px;">Cancel</span>
<div class="a" style="left:1149px;top:702px;width:75px;height:22px;background:#d4d0c8;border:1px solid;border-color:#fff #404040 #404040 #fff;box-shadow:inset -1px -1px #808080;"></div><span class="t " style="left: 1173px; top: 708.19px; font-size: 11px; color: rgb(128, 128, 128); text-shadow: rgb(255, 255, 255) 1px 1px; letter-spacing: 0.09px;">Apply</span>
<div class="a" style="left:1230px;top:702px;width:75px;height:22px;background:#d4d0c8;border:1px solid;border-color:#fff #404040 #404040 #fff;box-shadow:inset -1px -1px #808080;"></div><span class="t " style="left: 1257px; top: 708.19px; font-size: 11px; color: rgb(0, 0, 0); letter-spacing: -0.25px;">Help</span>
<div class="a" style="left:1663px;top:97px;width:17px;height:923px;background-color:#f4f2ee;background-image:linear-gradient(45deg,#d4d0c8 25%,transparent 25%,transparent 75%,#d4d0c8 75%),linear-gradient(45deg,#d4d0c8 25%,transparent 25%,transparent 75%,#d4d0c8 75%);background-size:2px 2px;background-position:0 0,1px 1px"></div>
<div class="a" style="left:1663px;top:96px;width:17px;height:17px;background:#d4d0c8;border:1px solid;border-color:#fff #404040 #404040 #fff;box-shadow:inset -1px -1px #808080"></div>
<div class="a" style="left:1668px;top:101px;width:0;height:0;border-left:4px solid transparent;border-right:4px solid transparent;border-bottom:4px solid #000"></div>
<div class="a" style="left:1664px;top:344px;width:16px;height:235px;background:#d4d0c8;border:1px solid;border-color:#fff #404040 #404040 #fff;box-shadow:inset -1px -1px #808080"></div>
<div class="a" style="left:1663px;top:1003px;width:17px;height:17px;background:#d4d0c8;border:1px solid;border-color:#fff #404040 #404040 #fff;box-shadow:inset -1px -1px #808080"></div>
<div class="a" style="left:1668px;top:1009px;width:0;height:0;border-left:4px solid transparent;border-right:4px solid transparent;border-top:4px solid #000"></div>
<div class="a" style="left:0px;top:0px;width:1680px;height:25px;background:linear-gradient(#9fbee8,#a3c1ea)"></div>
<div class="a" style="left:0px;top:0px;width:1680px;height:1px;background:#7d8ea6"></div>
<svg class="a" style="left:0;top:0" width="1680" height="25"><defs><linearGradient id="gi" x1="0" y1="0" x2="0" y2="1"><stop offset="0" stop-color="#c6dbf6"></stop><stop offset="1" stop-color="#a9c7ee"></stop></linearGradient><linearGradient id="ga" x1="0" y1="0" x2="0" y2="1"><stop offset="0" stop-color="#ffffff"></stop><stop offset="1" stop-color="#fafafa"></stop></linearGradient></defs><path d="M985.5 24.5 L992 9 Q993 7 995 7 L1004 7 Q1006 7 1007 9 L1010 18 Q1011 20 1009 20 L996 20" fill="#b7cff0" stroke="#7c96bb"></path><rect x="0" y="24" width="1680" height="1" fill="#7c93b6"></rect><path d="M775.5 24.5 L785.5 3 Q787 1.5 789 1.5 L969 1.5 Q971 1.5 972.5 3 L983.5 24.5" fill="url(#gi)" stroke="#7c96bb"></path><path d="M581.5 24.5 L591.5 3 Q593 1.5 595 1.5 L775 1.5 Q777 1.5 778.5 3 L789.5 24.5" fill="url(#gi)" stroke="#7c96bb"></path><path d="M387.5 24.5 L397.5 3 Q399 1.5 401 1.5 L581 1.5 Q583 1.5 584.5 3 L595.5 24.5" fill="url(#gi)" stroke="#7c96bb"></path><path d="M193.5 24.5 L203.5 3 Q205 1.5 207 1.5 L387 1.5 Q389 1.5 390.5 3 L401.5 24.5" fill="url(#gi)" stroke="#7c96bb"></path><path d="M-0.5 25 L10.5 3 Q12 1.5 14 1.5 L194 1.5 Q196 1.5 197.5 3 L208.5 25Z" fill="url(#ga)"></path><path d="M-0.5 25 L10.5 3 Q12 1.5 14 1.5 L194 1.5 Q196 1.5 197.5 3 L208.5 25" fill="none" stroke="#6f86a8"></path></svg>
<div class="a" style="left:17px;top:5px;width:16px;height:16px;background:linear-gradient(#8c9db3,#a9b7c7);border-radius:2px"></div><span class="t" style="left:19.5px;top:7.5px;font-size:10px;font-weight:bold;color:#f0f4f8;letter-spacing:-1.3px">mc</span>
<span class="t " style="left: 36.5px; top: 7.27px; font-size: 11.5px; color: rgb(0, 0, 0); letter-spacing: -0.13px;">spor internet</span>
<span class="t " style="left:186px;top:5.30px;font-size:15px;color:#a8a8a8;">×</span>
<div class="a" style="left:211px;top:5px;width:16px;height:16px;background:linear-gradient(#8c9db3,#a9b7c7);border-radius:2px"></div><span class="t" style="left:213.5px;top:7.5px;font-size:10px;font-weight:bold;color:#f0f4f8;letter-spacing:-1.3px">mc</span>
<span class="t " style="left: 230.5px; top: 7.27px; font-size: 11.5px; color: rgb(26, 26, 26); letter-spacing: -0.26px;">Pravljenje screenshota</span>
<span class="t " style="left:380px;top:5.30px;font-size:15px;color:#8ea4c0;">×</span>
<div class="a" style="left:405px;top:5px;width:16px;height:16px;background:linear-gradient(#8c9db3,#a9b7c7);border-radius:2px"></div><span class="t" style="left:407.5px;top:7.5px;font-size:10px;font-weight:bold;color:#f0f4f8;letter-spacing:-1.3px">mc</span>
<div class="a" style="left:424px;top:3px;width:146px;height:20px;overflow:hidden"><span class="t " style="left: 0px; top: 4.27px; font-size: 11.5px; color: rgb(26, 26, 26); letter-spacing: -0.02px;">Postavljanje thumbnailova (ma</span></div>
<div class="a" style="left:540px;top:3px;width:30px;height:20px;background:linear-gradient(90deg,rgba(186,210,243,0),#b9d1f2)"></div>
<span class="t " style="left:574px;top:5.30px;font-size:15px;color:#8ea4c0;">×</span>
<svg class="a" style="left:599px;top:5px" width="16" height="16" viewBox="0 0 16 16"><circle cx="7.8" cy="7.8" r="6.8" fill="#c4d6ee" stroke="#263c5c" stroke-width="1.3"></circle><path d="M4 4.5 Q6 2.5 9 3.5 Q9.5 5.5 8 6.5 Q6.5 7 7.5 8.5 Q6 9 4.5 7.5 Q3.5 6 4 4.5Z" fill="#7d8ea6"></path><path d="M7.5 9.5 Q10 9 11 10.5 Q11 12.5 9 13.8 Q8 12 7.5 9.5Z" fill="#7d8ea6"></path><path d="M11.5 6 Q13 6.5 13.2 8 Q12 8.5 11.3 7.5Z" fill="#8a9ab0"></path></svg>
<span class="t " style="left: 618.5px; top: 7.27px; font-size: 11.5px; color: rgb(26, 26, 26); letter-spacing: -0.46px;">Fotkica.com</span>
<span class="t " style="left:768px;top:5.30px;font-size:15px;color:#8ea4c0;">×</span>
<div class="a" style="left:794px;top:6px;width:14px;height:14px;background:#3b5998;border:1px solid #2a4a88"></div><span class="t " style="left:799px;top:7.65px;font-size:14px;color:#fff;font-weight:bold;">f</span>
<span class="t " style="left: 812.5px; top: 7.27px; font-size: 11.5px; color: rgb(26, 26, 26); letter-spacing: -0.51px;">Facebook</span>
<span class="t " style="left:962px;top:5.30px;font-size:15px;color:#8ea4c0;">×</span>
<svg class="a" style="left:982px;top:6px" width="30" height="19" viewBox="0 0 30 19"><path d="M4.5 2.5 Q5 1.5 6.5 1.5 L20 1.5 Q21.5 1.5 22.5 3 L26.5 13.5 Q27 15.5 25 15.5 L9 15.5 Q7.5 15.5 7 14 Z" fill="#b9d1f2" stroke="#7c96bb"></path><path d="M16 4.5 V12.5 M12 8.5 H20" stroke="#7c96bb" stroke-width="4.2"></path><path d="M16 5 V12 M12.5 8.5 H19.5" stroke="#fff" stroke-width="2.2"></path></svg>
<div class="a" style="left:1583px;top:-3px;width:93px;height:19px;border:1px solid #6d87ad;border-radius:0 0 4px 4px;background:linear-gradient(#c4d8f2,#a6c2e9)"></div>
<div class="a" style="left:1608px;top:0px;width:1px;height:15px;background:#7d95b8"></div>
<div class="a" style="left:1634px;top:0px;width:1px;height:15px;background:#7d95b8"></div>
<div class="a" style="left:1591px;top:7px;width:11px;height:4px;border:1px solid #3a4a60;background:#fff;border-radius:1px"></div>
<div class="a" style="left:1617px;top:3px;width:9px;height:8px;border:1.5px solid #3a4a60"></div>
<div class="a" style="left:1614px;top:6px;width:9px;height:8px;border:1.5px solid #3a4a60;background:#b8cff0"></div>
<svg class="a" style="left:1648px;top:3px" width="14" height="11" viewBox="0 0 14 11"><path d="M2 1 L12 10 M12 1 L2 10" stroke="#2a3a50" stroke-width="2.4"></path><path d="M2 1 L12 10 M12 1 L2 10" stroke="#fff" stroke-width="0.8"></path></svg>
<div class="a" style="left:0px;top:25px;width:1680px;height:35px;background:linear-gradient(#fdfdfd,#f2f2f2)"></div>
<svg class="a" style="left:7px;top:34px" width="18" height="16" viewBox="0 0 18 16"><path d="M16 8 H4 M9.5 2.5 L3.5 8 L9.5 13.5" fill="none" stroke="#4a4a4a" stroke-width="3"></path></svg>
<svg class="a" style="left:32px;top:34px" width="18" height="16" viewBox="0 0 18 16"><path d="M2 8 H14 M8.5 2.5 L14.5 8 L8.5 13.5" fill="none" stroke="#c8c8c8" stroke-width="3"></path></svg>
<svg class="a" style="left:63px;top:33px" width="18" height="18" viewBox="0 0 18 18"><path d="M14.5 9 A5.5 5.5 0 1 1 11.5 4.2" fill="none" stroke="#4a4a4a" stroke-width="3"></path><path d="M9 0.5 L16.5 1.5 L14.5 8.5Z" fill="#4a4a4a"></path></svg>
<div class="a" style="left:91px;top:29px;width:1557px;height:27px;background:#fff;border:1px solid #b8b8b8;border-radius:2px"></div>
<svg class="a" style="left:95px;top:34px" width="17" height="17" viewBox="0 0 17 17"><circle cx="8.5" cy="8.5" r="7" fill="#e4e4e4" stroke="#7a7a7a" stroke-width="1.5"></circle><path d="M4.5 5 Q6.5 3 9.5 4 Q10 6 8.5 7 Q7 7.5 8 9 Q6.5 9.5 5 8 Q4 6.5 4.5 5Z" fill="#a8a8a8"></path><path d="M8 10 Q10.5 9.5 11.5 11 Q11.5 13 9.5 14.3 Q8.5 12.5 8 10Z" fill="#a8a8a8"></path></svg>
<div class="a" style="left:96px;top:55px;width:0;height:0;border-left:6px solid transparent;border-right:6px solid transparent;border-bottom:6px solid #e9e9e9"></div>
<span class="t " style="left: 116px; top: 35.8px; font-size: 15px; color: rgb(0, 0, 0); letter-spacing: -0.18px;">www.mycity.rs</span>
<span class="t " style="left: 207.5px; top: 35.8px; font-size: 15px; color: rgb(122, 122, 122); letter-spacing: -0.38px;">/Windows/spor-internet-4.html</span>
<svg class="a" style="left:1622px;top:33px" width="19" height="19" viewBox="0 0 19 19"><path d="M9.5 1.5 L11.8 6.8 L17.5 7.2 L13.2 11 L14.6 16.8 L9.5 13.7 L4.4 16.8 L5.8 11 L1.5 7.2 L7.2 6.8Z" fill="#fff" stroke="#555" stroke-width="1.6" stroke-linejoin="round"></path></svg>
<svg class="a" style="left:1652px;top:33px" width="20" height="20" viewBox="0 0 20 20"><path d="M3 6 A5 5 0 0 0 10 11 L16 17 L18 15 L12 9 A5 5 0 0 0 7 2 L9 5 L7 7 L4 5Z" fill="#333"></path></svg>
<div class="a" style="left:0px;top:60px;width:1680px;height:37px;background:linear-gradient(#f0f0f0,#dedede);border-top:1px solid #c4c4c4;border-bottom:1px solid #a9a9a9"></div>
<div class="a" style="left:96px;top:55px;width:0;height:0;border-left:6px solid transparent;border-right:6px solid transparent;border-bottom:6px solid #f0f0f0"></div>
<div class="a" style="left:10px;top:66px;width:14px;height:15px;background:#fafafa;border:1px solid #9a9a9a;border-radius:1px;box-shadow:1px 1px 1px #aaa"></div>
<span class="t " style="left:12px;top:69.53px;font-size:10px;color:#333;">文</span>
<div class="a" style="left:21px;top:74px;width:14px;height:16px;background:#fafafa;border:1px solid #9a9a9a;border-radius:1px;box-shadow:1px 1px 1px #999"></div>
<span class="t " style="left:23px;top:77.84px;font-size:12px;color:#333;font-weight:bold;">A</span>
<span class="t " style="left: 43px; top: 72.15px; font-size: 14px; color: rgb(0, 0, 0); letter-spacing: -0.4px;">This page is in</span>
<div class="a" style="left:132px;top:65px;width:68px;height:27px;border:1px solid #a0a0a0;border-radius:3px;background:linear-gradient(#fdfdfd,#e8e8e8)"></div>
<span class="t " style="left: 137.5px; top: 72.15px; font-size: 14px; color: rgb(0, 0, 0); letter-spacing: -0.36px;">Serbian</span>
<div class="a" style="left:186px;top:77px;width:0;height:0;border-left:4px solid transparent;border-right:4px solid transparent;border-top:4px solid #000"></div>
<span class="t " style="left: 205px; top: 72.15px; font-size: 14px; color: rgb(0, 0, 0); letter-spacing: -0.05px;">Would you like to translate it?</span>
<div class="a" style="left:402px;top:65px;width:67px;height:27px;border:1px solid #a0a0a0;border-radius:3px;background:linear-gradient(#fdfdfd,#e8e8e8)"></div>
<span class="t " style="left: 408.5px; top: 72.15px; font-size: 14px; color: rgb(0, 0, 0); letter-spacing: -0.34px;">Translate</span>
<div class="a" style="left:479px;top:65px;width:44px;height:27px;border:1px solid #a0a0a0;border-radius:3px;background:linear-gradient(#fdfdfd,#e8e8e8)"></div>
<span class="t " style="left: 484.5px; top: 72.15px; font-size: 14px; color: rgb(0, 0, 0); letter-spacing: -0.28px;">Nope</span>
<div class="a" style="left:1576px;top:65px;width:70px;height:27px;border:1px solid #a0a0a0;border-radius:3px;background:linear-gradient(#fdfdfd,#e8e8e8)"></div>
<span class="t " style="left: 1582px; top: 72.15px; font-size: 14px; color: rgb(0, 0, 0); letter-spacing: -0.11px;">Options</span>
<div class="a" style="left:1633px;top:77px;width:0;height:0;border-left:4px solid transparent;border-right:4px solid transparent;border-top:4px solid #000"></div>
<svg class="a" style="left:1660px;top:74px" width="10" height="10" viewBox="0 0 10 10"><path d="M1 1 L9 9 M9 1 L1 9" stroke="#a8a8a8" stroke-width="2.2"></path></svg>
<div class="a" style="left:0px;top:1020px;width:1680px;height:30px;background:#d4d0c8;border-top:1px solid #fff"></div>
<div class="a" style="left:0px;top:1020px;width:1680px;height:1px;background:#d4d0c8"></div>
<div class="a" style="left:0px;top:1021px;width:1680px;height:1px;background:#fff"></div>
<div class="a" style="left:2px;top:1023px;width:52px;height:22px;background:#d4d0c8;border:1px solid;border-color:#fff #404040 #404040 #fff;box-shadow:inset -1px -1px #808080"></div>
<svg class="a" style="left:5px;top:1026px" width="16" height="16" viewBox="0 0 16 16"><path d="M2 3 Q4 2 7 3 V7 Q4 6 2 7Z" fill="#e8482a"></path><path d="M8 3 Q11 4 14 3 V7 Q11 8 8 7Z" fill="#4aa82a"></path><path d="M2 8 Q4 7 7 8 V12 Q4 11 2 12Z" fill="#2a6ae8"></path><path d="M8 8 Q11 9 14 8 V12 Q11 13 8 12Z" fill="#f8c820"></path></svg>
<span class="t " style="left: 21.5px; top: 1029px; font-size: 13px; color: rgb(0, 0, 0); font-weight: bold; letter-spacing: -0.15px;">Start</span>
<svg class="a" style="left:62px;top:1028px" width="16" height="16" viewBox="0 0 16 16"><circle cx="8" cy="8" r="7.5" fill="#2a9a4a"></circle><circle cx="8" cy="8" r="5.8" fill="none" stroke="#d8f0d8" stroke-width="1.2"></circle><path d="M5 4.5 V8.5 Q5 11 8 11 Q11 11 11 8.5 V4.5" fill="none" stroke="#fff" stroke-width="2.2"></path><path d="M4 4.5 H6.5 M9.5 4.5 H12" stroke="#fff" stroke-width="1.4"></path></svg>
<svg class="a" style="left:85px;top:1028px" width="16" height="16" viewBox="0 0 16 16"><circle cx="8" cy="8" r="7.5" fill="#e0382a"></circle><path d="M8 8 L1.5 4.2 A7.5 7.5 0 0 0 8 15.5Z" fill="#3aa040"></path><path d="M8 8 L8 15.5 A7.5 7.5 0 0 0 14.5 4.2Z" fill="#f8c830"></path><path d="M8 8 L14.5 4.2 A7.5 7.5 0 0 0 1.5 4.2Z" fill="#e0382a"></path><circle cx="8" cy="8" r="3.6" fill="#fff"></circle><circle cx="8" cy="8" r="2.7" fill="#3a78d8"></circle></svg>
<svg class="a" style="left:107px;top:1027px" width="17" height="17" viewBox="0 0 17 17"><rect x="0.5" y="0.5" width="16" height="16" fill="#fde9a8" stroke="#e0a040"></rect><rect x="2" y="2" width="13" height="13" fill="#fff4c8"></rect><circle cx="8.5" cy="8.5" r="5" fill="none" stroke="#c89030" stroke-width="1.2"></circle><path d="M8.5 5.5 V8.5 H11" fill="none" stroke="#c89030" stroke-width="1.2"></path></svg>
<svg class="a" style="left:130px;top:1026px" width="17" height="18" viewBox="0 0 17 18"><ellipse cx="8.5" cy="11" rx="7.5" ry="6.5" fill="#e8eaf0" stroke="#606a80" stroke-width="1"></ellipse><ellipse cx="8.5" cy="11" rx="2.5" ry="2" fill="#fff" stroke="#606a80" stroke-width="0.8"></ellipse><path d="M2 4.5 L3.5 0.5 L5 3 L6.5 0.5 L8 4.5" fill="none" stroke="#2a3450" stroke-width="1.2"></path><path d="M9 0.5 L10.5 4.5 L12 0.5 M13 1 Q15.5 0.5 15 2.5 L13 4.5 H15.5" fill="none" stroke="#2a3450" stroke-width="1.2"></path></svg>
<svg class="a" style="left:154px;top:1027px" width="17" height="17" viewBox="0 0 17 17"><rect x="0.5" y="1.5" width="14" height="14" rx="3" fill="#4a8ad8" stroke="#2a5aa0"></rect><rect x="3" y="4" width="9" height="9" rx="1.5" fill="#cfe4fa"></rect><path d="M6 11 L13 3 L15.5 5 L8.5 12.5 L5.5 13Z" fill="#2a5aa0" stroke="#fff" stroke-width="0.8"></path></svg>
<span class="t " style="left:193px;top:1026.00px;font-size:13px;color:#000;font-weight:bold;">»</span>
<div class="a" style="left:205px;top:1023px;width:160px;height:23px;border:1px solid;border-color:#404040 #fff #fff #404040;box-shadow:inset 1px 1px #808080;background-color:#ebe9e4;background-image:linear-gradient(45deg,#fff 25%,transparent 25%,transparent 75%,#fff 75%),linear-gradient(45deg,#fff 25%,transparent 25%,transparent 75%,#fff 75%);background-size:2px 2px;background-position:0 0,1px 1px"></div>
<svg class="a" style="left:209px;top:1026px" width="20" height="18" viewBox="0 0 20 18"><path d="M1.9 15.8 L4.6 9.8 L16.6 9.4 L16.4 15.6Z" fill="#d8dcd8" stroke="#1a1a2a" stroke-width="0.7"></path><rect x="9.5" y="3" width="1.6" height="6.5" fill="#aab"></rect><rect x="10.7" y="2.5" width="1.4" height="7" fill="#fff"></rect><path d="M10 9 H15.5 L14.5 10.8 H9.5Z" fill="#000"></path><path d="M17.5 1.2 L14.2 8.8" stroke="#c8308a" stroke-width="1.8"></path><circle cx="5.6" cy="13.4" r="1" fill="#000"></circle><circle cx="8.4" cy="14.2" r="1" fill="#000"></circle><path d="M10.5 12.3 H15" stroke="#000" stroke-width="1.6"></path><circle cx="11.1" cy="14" r="0.9" fill="#000"></circle></svg>
<div class="a" style="left:229px;top:1026px;width:133px;height:18px;overflow:hidden"><span class="t " style="left: 0px; top: 3.84px; font-size: 12px; color: rgb(0, 0, 0); font-weight: bold; letter-spacing: -0.12px;">System Configuration...</span></div>
<div class="a" style="left:368px;top:1023px;width:160px;height:23px;background:#d4d0c8;border:1px solid;border-color:#fff #404040 #404040 #fff;box-shadow:inset -1px -1px #808080"></div>
<svg class="a" style="left:373px;top:1027px" width="16" height="16" viewBox="0 0 16 16"><circle cx="8" cy="8" r="7.5" fill="#e0382a"></circle><path d="M8 8 L1.5 4.2 A7.5 7.5 0 0 0 8 15.5Z" fill="#3aa040"></path><path d="M8 8 L8 15.5 A7.5 7.5 0 0 0 14.5 4.2Z" fill="#f8c830"></path><path d="M8 8 L14.5 4.2 A7.5 7.5 0 0 0 1.5 4.2Z" fill="#e0382a"></path><circle cx="8" cy="8" r="3.6" fill="#fff"></circle><circle cx="8" cy="8" r="2.7" fill="#3a78d8"></circle></svg>
<span class="t " style="left: 391.5px; top: 1030.27px; font-size: 11.5px; color: rgb(0, 0, 0); letter-spacing: -0.19px;">spor internet - Google C...</span>
<div class="a" style="left:531px;top:1023px;width:160px;height:23px;background:#d4d0c8;border:1px solid;border-color:#fff #404040 #404040 #fff;box-shadow:inset -1px -1px #808080"></div>
<div class="a" style="left:537px;top:1027px;width:12px;height:16px;background:linear-gradient(90deg,#c84,#6a4,#c44);border-radius:2px 2px 5px 5px"></div>
<span class="t " style="left: 554.5px; top: 1030.27px; font-size: 11.5px; color: rgb(0, 0, 0); letter-spacing: -0.25px;">aaaaaaaaaaaaaaaaaaaa...</span>
<div class="a" style="left:1261px;top:1028px;width:17px;height:16px;background:#0a246a"></div><span class="t " style="left: 1262px; top: 1031.69px; font-size: 11px; color: rgb(255, 255, 255); letter-spacing: 0.1px;">EN</span>
<div class="a" style="left:1282px;top:1024px;width:2px;height:22px;border-left:1px solid #808080;border-right:1px solid #fff"></div>
<span class="t " style="left: 1291px; top: 1030.69px; font-size: 11px; color: rgb(0, 0, 0); letter-spacing: -0.23px;">My Documents</span>
<svg class="a" style="left:1368px;top:1027px" width="17" height="16" viewBox="0 0 17 16"><path d="M1 3 H6 L7 4.5 H15 V14.5 H1Z" fill="#f4d66a" stroke="#b08a2a"></path><path d="M1 6 H15" stroke="#fff4c0"></path></svg>
<span class="t " style="left: 1389px; top: 1030.69px; font-size: 11px; color: rgb(0, 0, 0); letter-spacing: -0.41px;">18 WoS A</span>
<span class="t " style="left:1443px;top:1026.00px;font-size:13px;color:#000;font-weight:bold;">»</span>
<div class="a" style="left:1454px;top:1024px;width:226px;height:23px;border:1px solid;border-color:#808080 #fff #fff #808080"></div>
<svg class="a" style="left:1457px;top:1028px" width="16" height="16" viewBox="0 0 16 16"><circle cx="8" cy="8" r="7.5" fill="#1f8a40"></circle><circle cx="8" cy="8" r="6" fill="none" stroke="#c8ecc8" stroke-width="0.8"></circle><path d="M5 4.5 V8.5 Q5 11.2 8 11.2 Q11 11.2 11 8.5 V4.5" fill="none" stroke="#fff" stroke-width="2.3"></path></svg>
<svg class="a" style="left:1475px;top:1028px" width="16" height="16" viewBox="0 0 16 16"><circle cx="8" cy="8" r="7.2" fill="#eef4fc" stroke="#3a6ac0" stroke-width="1.3"></circle><path d="M9.5 2.5 L4.5 9 H8 L6.5 13.5 L11.5 7 H8Z" fill="#2a6ae0"></path></svg>
<svg class="a" style="left:1493px;top:1027px" width="16" height="17" viewBox="0 0 16 17"><rect x="6" y="1" width="9" height="9" fill="#6a70c8" stroke="#3a3a8a"></rect><rect x="1" y="7" width="9" height="9" fill="#5a60b8" stroke="#2a2a7a"></rect><rect x="2.5" y="8.5" width="6" height="5" fill="#a8b0f0"></rect></svg>
<svg class="a" style="left:1510px;top:1027px" width="17" height="17" viewBox="0 0 17 17"><circle cx="5" cy="5" r="2.5" fill="#5ac05a"></circle><path d="M1 12 Q2 7 5 8 Q8 7 8 12Z" fill="#4aa84a"></path><circle cx="10" cy="4" r="2.5" fill="#4a90e0"></circle><path d="M6 10 Q7 6 10 7 Q13 6 13 10Z" fill="#3a7ad0"></path><circle cx="12" cy="12.5" r="3.8" fill="#e04040"></circle><path d="M10.3 10.8 L13.7 14.2 M13.7 10.8 L10.3 14.2" stroke="#fff" stroke-width="1.2"></path></svg>
<div class="a" style="left:1529px;top:1029px;width:16px;height:13px;background:#e01a1a"></div><span class="t " style="left:1530px;top:1031.04px;font-size:10px;color:#fff;font-weight:bold;font-style:italic;letter-spacing:-0.6px">ATI</span>
<svg class="a" style="left:1547px;top:1028px" width="16" height="16" viewBox="0 0 16 16"><circle cx="8" cy="8" r="7" fill="#6a6a6a" stroke="#3a3a3a"></circle><circle cx="7" cy="7" r="3.5" fill="#aaa"></circle><circle cx="6" cy="6" r="1.5" fill="#eee"></circle></svg>
<svg class="a" style="left:1565px;top:1028px" width="16" height="16" viewBox="0 0 16 16"><path d="M1 6 H4 L9 1.5 V14.5 L4 10 H1Z" fill="#e86a3a" stroke="#8a3010" stroke-width="0.8"></path><path d="M11 5 Q12.5 8 11 11 M13 3 Q15.5 8 13 13" fill="none" stroke="#3a2a2a" stroke-width="1.3"></path></svg>
<svg class="a" style="left:1583px;top:1028px" width="16" height="16" viewBox="0 0 16 16"><circle cx="8" cy="8" r="7.5" fill="#4ac030" stroke="#1a6a10"></circle><path d="M8 2 V14 M2 8 H14" stroke="#1a5a20" stroke-width="1.5"></path><path d="M8 2 L6 5 H10Z M8 14 L6 11 H10Z M2 8 L5 6 V10Z M14 8 L11 6 V10Z" fill="#1a5a20"></path></svg>
<svg class="a" style="left:1601px;top:1028px" width="16" height="16" viewBox="0 0 16 16"><circle cx="8" cy="8" r="7.5" fill="#dce8f4" stroke="#a8bcd4"></circle><circle cx="8" cy="8" r="2" fill="#fff" stroke="#a8bcd4"></circle></svg>
<span class="t " style="left: 1619.5px; top: 1030.27px; font-size: 11.5px; color: rgb(0, 0, 0); letter-spacing: 0.08px;">11:57 PM</span>
<span class="t" style="left:1593px;top:1032px;font-family:'Liberation Mono',monospace;font-size:13px;font-weight:bold;color:#fff;letter-spacing:1.3px;text-shadow:1px 0 #333,-1px 0 #333,0 1px #333,0 -1px #333">mycity.rs</span>

</body></html>
